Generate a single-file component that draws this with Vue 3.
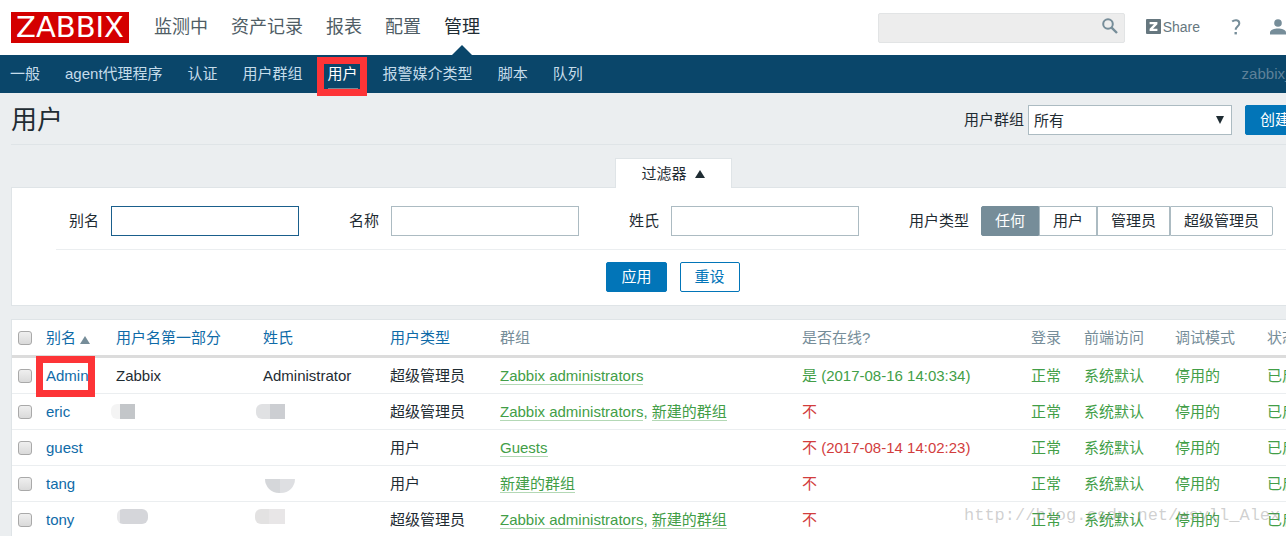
<script setup>
import { ref } from 'vue'

const menu = ['监测中', '资产记录', '报表', '配置', '管理']
const submenu = ['一般', 'agent代理程序', '认证', '用户群组', '用户', '报警媒介类型', '脚本', '队列']
const userTypes = ['任何', '用户', '管理员', '超级管理员']
const userType = ref('任何')

const ADMINS = 'Zabbix administrators'
const CUSTOM = '新建的群组'
const rows = [
  { alias: 'Admin', name: 'Zabbix', surname: 'Administrator', type: '超级管理员', groups: [ADMINS], online: true, status: '是 (2017-08-16 14:03:34)', marked: true },
  { alias: 'eric', nameMask: 'm1', surnameMask: 'm2', type: '超级管理员', groups: [ADMINS, CUSTOM], status: '不' },
  { alias: 'guest', type: '用户', groups: ['Guests'], status: '不 (2017-08-14 14:02:23)' },
  { alias: 'tang', surnameMask: 'm3', type: '用户', groups: [CUSTOM], status: '不' },
  { alias: 'tony', nameMask: 'm4', surnameMask: 'm5', type: '超级管理员', groups: [ADMINS, CUSTOM], status: '不' },
]
</script>

<template>
  <div class="viewport">
    <div class="page">
      <header class="top">
        <a href="#" class="logo">ZABBIX</a>
        <nav class="menu">
          <a v-for="m in menu" :key="m" href="#" :class="{ active: m === '管理' }">{{ m }}</a>
        </nav>
        <div class="tools">
          <form class="search" @submit.prevent>
            <input type="text" aria-label="搜索" />
            <button type="submit" aria-label="搜索">
              <svg width="16" height="16" viewBox="0 0 16 16" fill="none" stroke="#768d99">
                <circle cx="6" cy="6" r="4.8" stroke-width="2" />
                <path d="M9.6 9.6 L15 15" stroke-width="2.4" />
              </svg>
            </button>
          </form>
          <a href="#" class="share">
            <svg width="15" height="15" viewBox="0 0 15 15">
              <rect width="15" height="15" rx="1" fill="#66777f" />
              <path d="M3.6 3 H11.4 V5.2 L7 9.8 H11.4 V12 H3.6 V9.8 L8 5.2 H3.6 Z" fill="#fff" />
            </svg>
            <span>Share</span>
          </a>
          <a href="#" class="help" aria-label="帮助">
            <svg width="10" height="16" viewBox="0 0 10 16">
              <path d="M1.2 2.6 C3.4 .6 8.3 .6 8.3 4.4 C8.3 7.2 4.7 7.2 4.7 10.8" fill="none" stroke="#768d99" stroke-width="2" />
              <rect x="3.5" y="13" width="2.4" height="2.4" fill="#768d99" />
            </svg>
          </a>
          <a href="#" class="person" aria-label="用户资料">
            <svg width="16" height="16" viewBox="0 0 16 16" fill="#768d99">
              <circle cx="8" cy="4" r="3.8" />
              <path d="M0 15.5 V13.5 C0 11 4.5 9.6 8 9.6 C11.5 9.6 16 11 16 13.5 V15.5 Z" />
            </svg>
          </a>
        </div>
      </header>

      <nav class="sub">
        <a v-for="s in submenu" :key="s" href="#" :class="{ selected: s === '用户' }">{{ s }}</a>
        <span class="server">zabbix_server</span>
      </nav>

      <main>
        <div class="title">
          <h1>用户</h1>
          <label for="group">用户群组</label>
          <div class="select">
            <select id="group"><option>所有</option></select>
            <svg width="8" height="8" viewBox="0 0 8 8"><path d="M0 0 H8 L4 8 Z" fill="#1f2c33" /></svg>
          </div>
          <button type="button" class="btn">创建用户</button>
        </div>

        <section class="filter">
          <button type="button" class="tab">
            过滤器
            <svg width="10" height="8" viewBox="0 0 10 8"><path d="M0 8 L5 0 L10 8 Z" fill="#1f2c33" /></svg>
          </button>
          <form class="panel form" @submit.prevent>
            <div class="fields">
              <div class="field"><label for="alias">别名</label><input id="alias" class="focus" type="text" /></div>
              <div class="field"><label for="name">名称</label><input id="name" type="text" /></div>
              <div class="field"><label for="surname">姓氏</label><input id="surname" type="text" /></div>
              <div class="field" role="radiogroup" aria-labelledby="type-label">
                <span id="type-label" class="label">用户类型</span>
                <div class="segments">
                  <label v-for="t in userTypes" :key="t" :class="{ on: t === userType }">
                    <input v-model="userType" type="radio" name="type" :value="t" />{{ t }}
                  </label>
                </div>
              </div>
            </div>
            <div class="actions">
              <button type="submit" class="btn">应用</button>
              <button type="reset" class="btn alt">重设</button>
            </div>
          </form>
        </section>

        <div class="panel list">
          <table>
            <colgroup>
              <col class="c-check" /><col class="c-alias" /><col class="c-name" /><col class="c-surname" />
              <col class="c-type" /><col class="c-groups" /><col class="c-online" /><col class="c-login" />
              <col class="c-front" /><col class="c-debug" /><col />
            </colgroup>
            <thead>
              <tr>
                <th><input type="checkbox" aria-label="全选" /></th>
                <th>
                  <a href="#">别名 <svg width="10" height="8" viewBox="0 0 10 8"><path d="M0 8 L5 0 L10 8 Z" fill="#768d99" /></svg></a>
                </th>
                <th><a href="#">用户名第一部分</a></th>
                <th><a href="#">姓氏</a></th>
                <th><a href="#">用户类型</a></th>
                <th>群组</th>
                <th>是否在线?</th>
                <th>登录</th>
                <th>前端访问</th>
                <th>调试模式</th>
                <th>状态</th>
              </tr>
            </thead>
            <tbody>
              <tr v-for="r in rows" :key="r.alias">
                <td><input type="checkbox" :aria-label="r.alias" /></td>
                <td :class="{ marked: r.marked }"><a href="#">{{ r.alias }}</a></td>
                <td><i v-if="r.nameMask" class="mask" :class="r.nameMask"></i>{{ r.name }}</td>
                <td><i v-if="r.surnameMask" class="mask" :class="r.surnameMask"></i>{{ r.surname }}</td>
                <td>{{ r.type }}</td>
                <td class="groups">
                  <template v-for="(g, i) in r.groups" :key="g"><template v-if="i">, </template><a href="#">{{ g }}</a></template>
                </td>
                <td :class="r.online ? 'green' : 'red'">{{ r.status }}</td>
                <td class="green">正常</td>
                <td class="green">系统默认</td>
                <td class="green">停用的</td>
                <td class="green">已启用</td>
              </tr>
            </tbody>
          </table>
        </div>
      </main>
    </div>
    <div class="watermark">http://blog.csdn.net/wsyll_Alex</div>
  </div>
</template>

<style>
body {
  background: #ebeef0;
}
</style>

<style scoped>
.viewport {
  position: relative;
  height: 100vh;
  overflow: hidden;
  font: 15px/20px "Liberation Sans", "Noto Sans CJK SC", sans-serif;
  color: #1f2c33;
}
.viewport * {
  box-sizing: border-box;
}
.page {
  width: calc(100% + 60px);
}
a {
  color: #0f6ba8;
  text-decoration: none;
}
button,
input,
select {
  font: inherit;
  color: inherit;
  margin: 0;
}

.top {
  display: flex;
  align-items: center;
  height: 55px;
  padding: 0 60px 0 11px;
  background: #fff;
}
.logo {
  width: 118px;
  height: 31px;
  background: #d40000;
  color: #fff;
  font: 29px/31px "DejaVu Sans", sans-serif;
  text-align: center;
}
.menu {
  display: flex;
  align-self: stretch;
  gap: 23px;
  margin-left: 25px;
  font-size: 18px;
  line-height: 55px;
}
.menu a {
  position: relative;
  color: #4f5d65;
}
.menu .active {
  color: #1f2c33;
}
.menu .active::after {
  content: "";
  position: absolute;
  left: 50%;
  bottom: 0;
  margin-left: -10px;
  border: 10px solid transparent;
  border-top: 0;
  border-bottom-color: #0a466a;
}
.tools {
  display: flex;
  align-items: center;
  margin-left: auto;
}
.search {
  display: flex;
  width: 247px;
  height: 30px;
  background: #ededed;
  border: 1px solid #e2e4e5;
  border-radius: 2px;
}
.search input {
  flex: 1;
  min-width: 0;
  border: 0;
  background: none;
}
.search button {
  display: flex;
  align-items: center;
  padding: 0 6px 4px;
  border: 0;
  background: none;
}
.share {
  display: flex;
  align-items: center;
  gap: 2px;
  margin-left: 21px;
  font-size: 14px;
  color: #66777f;
}
.share,
.help,
.person {
  padding-bottom: 2px;
}
.help {
  display: flex;
  margin-left: 31px;
}
.person {
  display: flex;
  margin-left: 29px;
}

.sub {
  display: flex;
  gap: 25px;
  height: 38px;
  padding: 0 11px 0 10px;
  background: #0a466a;
  line-height: 37px;
}
.sub a {
  position: relative;
  color: #c5dcea;
}
.sub .selected {
  color: #fff;
}
.sub .selected::before {
  content: "";
  position: absolute;
  inset: 33px 0 auto;
  height: 3px;
  background: #768d99;
}
.sub .selected::after {
  content: "";
  position: absolute;
  inset: 2px -9px -3px -11px;
  border: 7px solid #fd3437;
}
.server {
  margin-left: auto;
  color: #5f8199;
}

main {
  padding: 0 11px;
}
.title {
  display: flex;
  align-items: center;
  height: 52px;
  padding-top: 3px;
  border-bottom: 1px solid #dfe4e7;
}
h1 {
  margin: 0 auto 0 0;
  font-size: 26px;
  font-weight: 400;
  line-height: 30px;
}
.title > label {
  line-height: 24px;
}
.select {
  position: relative;
  width: 204px;
  margin: 0 13px 0 4px;
}
select {
  display: block;
  width: 100%;
  height: 30px;
  padding: 2px 5px 0;
  border: 1px solid #acbbc2;
  border-radius: 0;
  background: #fff;
  appearance: none;
}
.select svg {
  position: absolute;
  right: 8px;
  top: 11px;
  pointer-events: none;
}
.btn {
  height: 30px;
  padding: 0 14px;
  border: 1px solid #0275b8;
  border-radius: 2px;
  background: #0275b8;
  color: #fff;
}
.btn.alt {
  background: #fff;
  color: #0275b8;
}

.panel {
  background: #fff;
  border: 1px solid #dfe4e7;
}
.filter {
  display: flex;
  flex-direction: column;
  align-items: center;
  margin-top: 13px;
}
.tab {
  position: relative;
  display: flex;
  align-items: center;
  justify-content: center;
  gap: 8px;
  width: 117px;
  height: 30px;
  margin-bottom: -1px;
  border: 1px solid #dfe4e7;
  border-bottom: 0;
  background: #fff;
}
.form {
  width: 100%;
  padding: 18px 44px 13px;
}
.fields {
  display: flex;
  gap: 50px;
  padding: 0 0 13px 13px;
  border-bottom: 1px solid #ebeef0;
}
.field {
  display: flex;
  align-items: center;
  gap: 12px;
  white-space: nowrap;
}
.field > input {
  width: 188px;
  height: 30px;
  border: 1px solid #acbbc2;
  background: #fff;
}
.field > .focus {
  border-color: #1a5f8c;
}
.segments {
  display: flex;
}
.segments label {
  height: 30px;
  padding: 0 13px;
  border: 1px solid #acbbc2;
  line-height: 28px;
}
.segments label:first-child {
  border-radius: 2px 0 0 2px;
}
.segments label:last-child {
  border-radius: 0 2px 2px 0;
}
.segments .on {
  background: #768d99;
  border-color: #768d99;
  color: #fff;
}
.segments input {
  position: absolute;
  opacity: 0;
  pointer-events: none;
}
.actions {
  display: flex;
  justify-content: center;
  gap: 13px;
  padding-top: 12px;
}

.list {
  margin-top: 13px;
}
table {
  width: 100%;
  table-layout: fixed;
  border-collapse: separate;
  border-spacing: 0;
}
.c-check { width: 29px; }
.c-alias { width: 70px; }
.c-name { width: 147px; }
.c-surname { width: 127px; }
.c-type { width: 110px; }
.c-groups { width: 302px; }
.c-online { width: 229px; }
.c-login { width: 53px; }
.c-front { width: 91px; }
.c-debug { width: 92px; }
th,
td {
  position: relative;
  height: 36px;
  padding: 0 0 0 5px;
  border-bottom: 1px solid #ebeef0;
  font-weight: 400;
  text-align: left;
  white-space: nowrap;
}
th {
  height: 38px;
  border-bottom: 3px solid #dcdcdc;
  color: #768d99;
}
th svg {
  vertical-align: -1px;
}
input[type="checkbox"] {
  display: block;
  width: 14px;
  height: 14px;
  margin-left: 1px;
  appearance: none;
  border: 1px solid #a9a9a9;
  border-radius: 3px;
  background: linear-gradient(#efefef, #dadada);
}
.groups,
.green,
.groups a {
  color: #429e47;
}
.groups a {
  border-bottom: 1px solid #b3d8b5;
}
.red {
  color: #d23d3d;
}
.marked::after {
  content: "";
  position: absolute;
  inset: -2px 16px -4px -5px;
  border: 7px solid #fd3437;
}
.mask {
  position: absolute;
  top: 10px;
  height: 15px;
}
.m1 {
  left: 0;
  width: 24px;
  background: linear-gradient(90deg, #f4f4f4 9px, #c3c6c9 9px);
  border-radius: 6px 0 0 6px;
}
.m2 {
  left: -2px;
  width: 29px;
  background: linear-gradient(90deg, #e0e1e3 14px, #ccced2 14px);
  border-radius: 6px 0 0 6px;
}
.m3 {
  left: 7px;
  top: 13px;
  width: 30px;
  height: 14px;
  background: linear-gradient(90deg, #d5d7da 15px, #dedfe2 15px);
  border-radius: 0 0 15px 15px;
}
.m4 {
  left: 6px;
  top: 7px;
  width: 31px;
  background: linear-gradient(90deg, #e8e8ea 3px, #d5d6da 3px);
  border-radius: 6px;
}
.m5 {
  left: -3px;
  top: 7px;
  width: 30px;
  background: linear-gradient(90deg, #e3e2e2 14px, #e8e6e7 14px);
  border-radius: 6px 0 0 6px;
}
.watermark {
  position: absolute;
  right: 0;
  bottom: 8px;
  width: 322px;
  color: rgba(120, 120, 120, 0.35);
  font: 17px/24px "Liberation Mono", monospace;
  white-space: nowrap;
  pointer-events: none;
}
</style>
